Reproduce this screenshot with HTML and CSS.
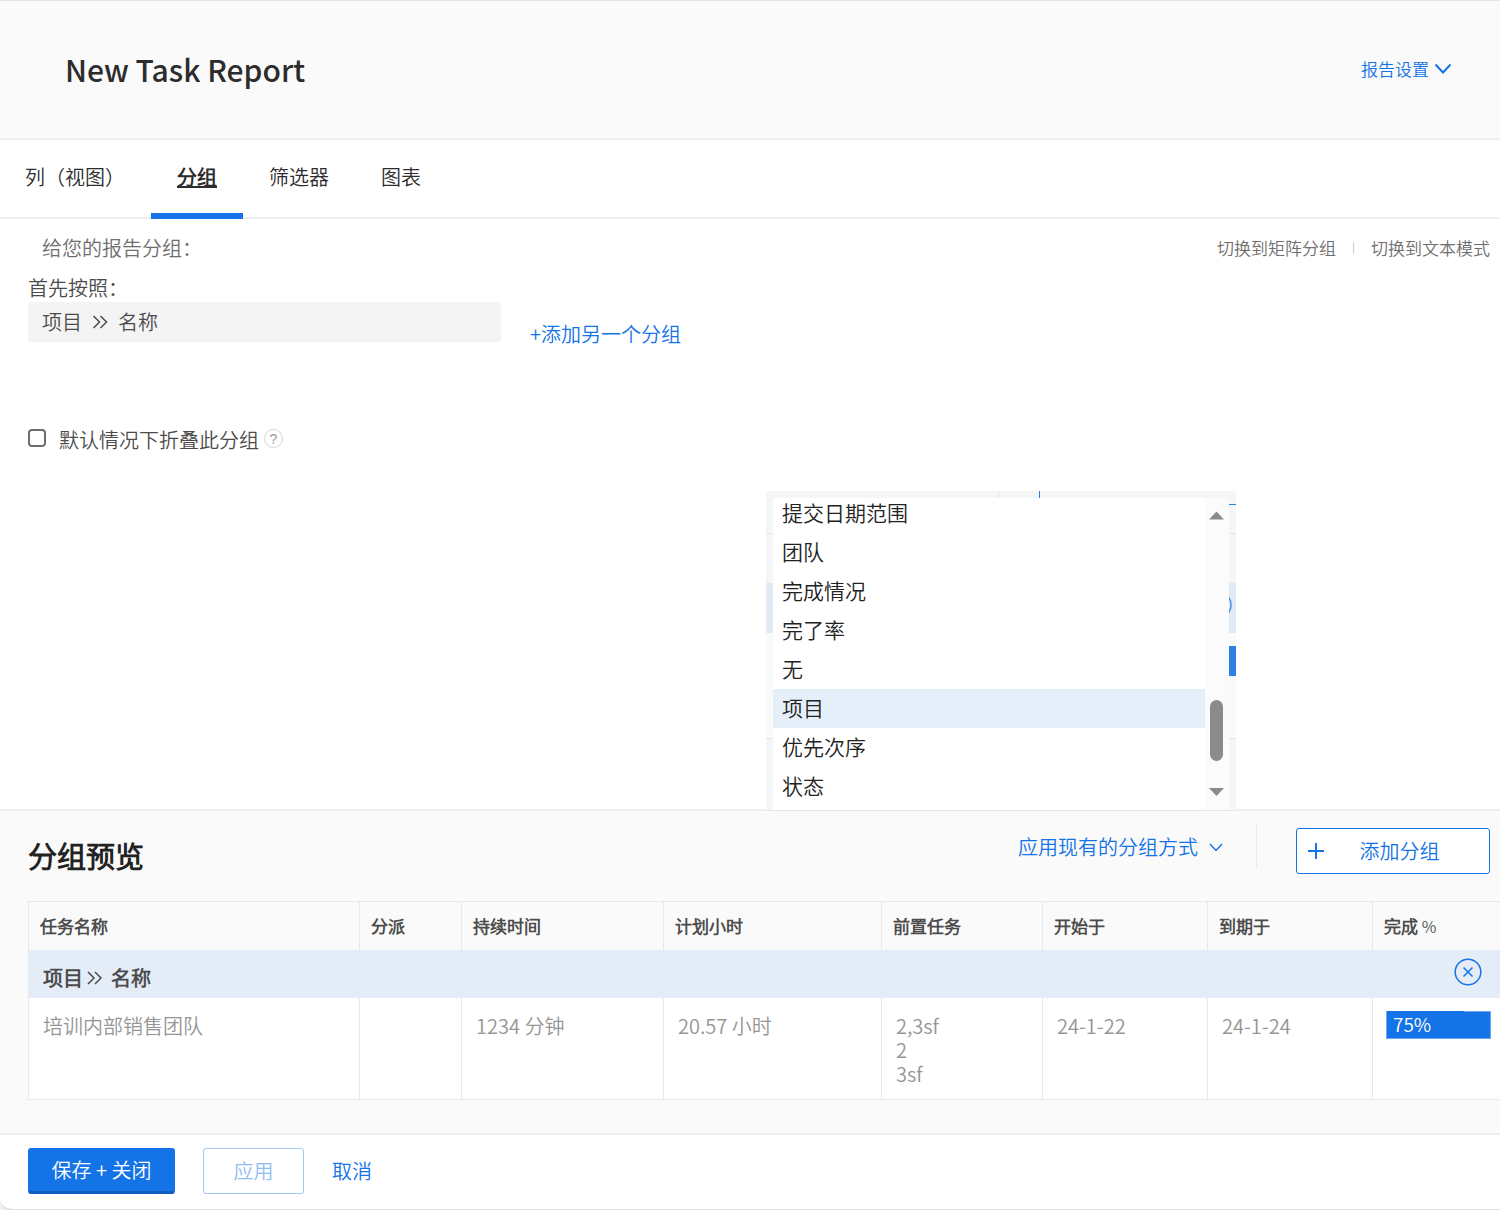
FILE: index.html
```html
<!DOCTYPE html>
<html lang="zh-CN">
<head>
<meta charset="utf-8">
<meta name="viewport" content="width=device-width, initial-scale=1">
<title>New Task Report</title>
<link rel="stylesheet" href="styles.css">
</head>
<body>
<div class="page">
  <header class="header">
    <h1 class="title">New Task Report</h1>
    <button class="link settings" type="button">报告设置
      <svg width="18" height="12" viewBox="0 0 18 12" fill="none" stroke="currentColor" stroke-width="2"><path d="M1.500 1.500 9 9.500l7.500-8"/></svg>
    </button>
  </header>

  <nav class="tabs">
    <a class="tab" href="#columns">列（视图）</a>
    <a class="tab active" href="#groupings" aria-current="page">分组</a>
    <a class="tab" href="#filters">筛选器</a>
    <a class="tab" href="#chart">图表</a>
  </nav>

  <main class="builder">
    <div class="intro">
      <p class="intro-text">给您的报告分组：</p>
      <div class="modes">
        <a href="#matrix">切换到矩阵分组</a>
        <span class="mode-rule"></span>
        <a href="#text">切换到文本模式</a>
      </div>
    </div>
    <div class="grouping">
      <div class="field">
        <label for="first-by">首先按照：</label>
        <button id="first-by" class="field-value" type="button">项目
          <svg width="16" height="14" viewBox="0 0 16 14" fill="none" stroke="currentColor" stroke-width="1.500"><path d="m1.500 1 6 6-6 6M8.500 1l6 6-6 6"/></svg>
          名称</button>
      </div>
      <button class="link add-another" type="button">+添加另一个分组</button>
    </div>
    <div class="collapse">
      <input id="collapse" class="check" type="checkbox">
      <label for="collapse">默认情况下折叠此分组</label>
      <button class="help" type="button" aria-label="帮助">?</button>
    </div>

    <div class="popup">
      <svg class="popup-back" viewBox="0 0 470 320" fill="none">
        <path fill="#f5f6f6" d="M0 0h470v320H0z"/>
        <path fill="#f9fbfb" d="M0 142h470v105H0z"/>
        <path fill="#e0eaf5" d="M0 92h470v50H0z"/>
        <path stroke="#e4e6e6" d="M0 42.500h470M0 247.500h470M232.500 0v8M0 319.500h470"/>
        <path stroke="#2f80e4" d="M273.500 0v8M463 13.500h7"/>
        <circle cx="452" cy="114" r="13" stroke="#4a90e8" stroke-width="1.500"/>
        <path fill="#2f80e4" d="M463 155h7v30h-7z"/>
      </svg>
      <div class="list">
        <select class="options" size="8" aria-label="分组字段">
          <option>提交日期范围</option>
          <option>团队</option>
          <option>完成情况</option>
          <option>完了率</option>
          <option>无</option>
          <option selected>项目</option>
          <option>优先次序</option>
          <option>状态</option>
        </select>
        <svg class="scrollbar" width="24" height="312" viewBox="0 0 24 312" fill="#8b8b8b"><path d="M4 21.500 11.500 13.500l7.500 8zM4 290l7.500 8 7.500-8z"/><rect x="5" y="202" width="13" height="61" rx="6.500"/></svg>
      </div>
    </div>
  </main>

  <section class="preview">
    <div class="preview-head">
      <h2 class="preview-title">分组预览</h2>
      <button class="link existing" type="button">应用现有的分组方式
        <svg width="14" height="9" viewBox="0 0 14 9" fill="none" stroke="currentColor" stroke-width="1.500"><path d="m1 1 6 6.500L13 1"/></svg>
      </button>
      <span class="head-rule"></span>
      <button class="btn add" type="button">
        <svg width="16" height="16" viewBox="0 0 16 16" stroke="currentColor" stroke-width="2"><path d="M8 0v16M0 8h16"/></svg>
        <span class="add-label">添加分组</span>
      </button>
    </div>
    <table class="table">
      <colgroup>
        <col class="c-name"><col class="c-assign"><col class="c-duration"><col class="c-hours"><col class="c-pred"><col class="c-date"><col class="c-date"><col>
      </colgroup>
      <thead>
        <tr><th>任务名称</th><th>分派</th><th>持续时间</th><th>计划小时</th><th>前置任务</th><th>开始于</th><th>到期于</th><th>完成 <span class="percent">%</span></th></tr>
      </thead>
      <tbody>
        <tr class="group-row">
          <th colspan="8">
            <div class="group">
              <span>项目</span>
              <svg width="15" height="14" viewBox="0 0 15 14" fill="none" stroke="currentColor" stroke-width="1.500"><path d="m1 1 6 6-6 6M8 1l6 6-6 6"/></svg>
              <span class="group-name">名称</span>
              <button class="remove" type="button" aria-label="移除分组">
                <svg width="28" height="28" viewBox="0 0 28 28" fill="none" stroke="currentColor" stroke-width="1.500"><circle cx="14" cy="14" r="12.800"/><path d="m9.500 9.500 9 9m0-9-9 9"/></svg>
              </button>
            </div>
          </th>
        </tr>
        <tr class="data-row">
          <td>培训内部销售团队</td><td></td><td>1234 分钟</td><td>20.57 小时</td><td>2,3sf<br>2<br>3sf</td><td>24-1-22</td><td>24-1-24</td>
          <td class="progress-cell"><div class="bar"><span class="bar-edge" style="width:75%"></span>75%</div></td>
        </tr>
      </tbody>
    </table>
  </section>

  <footer class="footer">
    <button class="btn primary" type="button">保存 + 关闭</button>
    <button class="btn apply" type="button" disabled>应用</button>
    <button class="link cancel" type="button">取消</button>
  </footer>
</div>
</body>
</html>
```
FILE: styles.css
```css
* { box-sizing: border-box; }

body {
  margin: 0;
  background: #f0f0f0;
  color: #4b4b4b;
  font: 350 20px/24px "Noto Sans CJK SC DemiLight", "Noto Sans CJK SC", sans-serif;
}

h1, h2, p { margin: 0; }
a { color: inherit; text-decoration: none; }
button { font: inherit; padding: 0; border: 0; background: none; color: inherit; }
svg { display: block; flex: none; }

.page {
  min-height: 100vh;
  display: flex;
  flex-direction: column;
  background: #fff;
  border-top: 1px solid #e4e4e4;
  border-bottom: 2px solid #e0e0e0;
  border-bottom-left-radius: 12px;
  overflow: hidden;
}

.link { display: flex; align-items: center; color: #1473e6; }

/* Header */
.header {
  display: flex;
  align-items: center;
  justify-content: space-between;
  padding: 48px 48px 49px 65px;
  background: #fafafa;
  border-bottom: 2px solid #efefef;
}
.title {
  color: #2c2c2c;
  font-family: "Noto Sans CJK SC", sans-serif;
  font-size: 30px;
  font-weight: 500;
  line-height: 40px;
}
.settings { gap: 5px; font-size: 17px; }

/* Tabs */
.tabs {
  display: flex;
  padding-left: 25px;
  border-bottom: 2px solid #efefef;
  color: #2c2c2c;
}
.tab {
  padding: 25px 26px 24px;
  border-bottom: 6px solid transparent;
  margin-bottom: -2px;
}
.tab:first-child { padding-left: 0; }
.tab.active {
  border-color: #1473e6;
  font-weight: 700;
  text-decoration: underline;
  text-decoration-thickness: 2px;
}

/* Grouping builder */
.builder {
  position: relative;
  flex: 1;
  min-height: 590px;
  padding: 17px 10px 0 28px;
}
.intro { display: flex; align-items: center; justify-content: space-between; }
.intro-text { padding-left: 14px; color: #6e6e6e; }
.modes {
  display: flex;
  align-items: center;
  gap: 17px;
  color: #6e6e6e;
  font-size: 17px;
}
.mode-rule { width: 1px; height: 12px; background: #cfcfcf; }

.grouping { display: flex; align-items: flex-end; gap: 29px; padding-top: 16px; }
.field { width: 473px; }
.field label { display: block; }
.field-value {
  display: flex;
  align-items: center;
  gap: 10px;
  width: 100%;
  height: 40px;
  margin-top: 2px;
  padding-left: 14px;
  background: #f4f4f4;
  border-radius: 3px;
}
.add-another { margin-bottom: -4px; }

.collapse { display: flex; align-items: center; padding-top: 86px; }
.check {
  appearance: none;
  width: 18px;
  height: 18px;
  margin: 0 13px 4px 0;
  border: 2px solid #6e6e6e;
  border-radius: 4px;
}
.help {
  width: 19px;
  height: 19px;
  margin: 0 0 3px 5px;
  border: 1px solid #d6d6d6;
  border-radius: 50%;
  color: #9a9a9a;
  font: 400 14px/16px "Liberation Sans", sans-serif;
}

/* Open field list */
.popup {
  position: absolute;
  right: 264px;
  bottom: -2px;
  z-index: 1;
  width: 470px;
  height: 320px;
  padding: 7px 7px 1px;
}
.popup-back { position: absolute; inset: 0; width: 100%; height: 100%; }
.list {
  position: relative;
  display: flex;
  height: 312px;
  background: #fff;
  overflow: hidden;
}
.options {
  appearance: none;
  flex: 1;
  height: 316px;
  margin: -4px 0 0;
  padding: 0;
  border: 0;
  outline: 0;
  background: #fff;
  color: #222;
  font: inherit;
  font-size: 21px;
  overflow: hidden;
}
.options option {
  height: 39px;
  min-height: 39px;
  padding: 3px 9px 0;
  color: #222;
  font: inherit;
}
.options option:checked { background: #e5effa linear-gradient(#e5effa, #e5effa); color: #222; }
.scrollbar { background: #fbfbfb; }

/* Preview */
.preview {
  padding: 17px 0 33px 28px;
  background: #fafafa;
  border-top: 2px solid #efefef;
}
.preview-head { display: flex; align-items: center; padding-right: 10px; height: 46px; }
.preview-title {
  margin-right: auto;
  padding-top: 8px;
  color: #222;
  font-size: 29px;
  font-weight: 700;
  line-height: 34px;
}
.existing { gap: 11px; margin-bottom: 8px; }
.head-rule { width: 1px; height: 46px; margin: 0 39px 10px 33px; background: #e8e8e8; }
.btn {
  display: flex;
  align-items: center;
  justify-content: center;
  height: 46px;
  border: 1px solid #1473e6;
  border-radius: 3px;
}
.add { width: 194px; padding-left: 11px; color: #1473e6; background: #fff; }
.add-label { flex: 1; padding-right: 14px; }

.table {
  width: 100%;
  margin-top: 27px;
  table-layout: fixed;
  border-collapse: collapse;
  border: 1px solid #e8e8e8;
  border-right: 0;
}
.c-name { width: 331px; }
.c-assign { width: 102px; }
.c-duration { width: 202px; }
.c-hours { width: 218px; }
.c-pred { width: 161px; }
.c-date { width: 165px; }
.table thead th {
  height: 48px;
  padding: 0 11px;
  border-right: 1px solid #e8e8e8;
  font-size: 17px;
  font-weight: 700;
  text-align: left;
}
.table tr > :last-child { border-right: 0; }
.percent { font-size: 16px; font-weight: 350; }
.group-row th { padding: 0; background: #e3ecf7; }
.group { display: flex; align-items: center; padding: 8px 18px 0 14px; font-weight: 700; }
.group svg { margin-left: 4px; }
.group-name { margin-left: 9px; }
.remove { margin: 0 0 12px auto; color: #1473e6; }
.group .remove svg { margin: 0; }
.data-row td {
  padding: 16px 14px 13px;
  background: #fff;
  border-right: 1px solid #e8e8e8;
  color: #959595;
  vertical-align: top;
}
.data-row .progress-cell { padding: 13px 9px 0 13px; }
.bar {
  position: relative;
  height: 28px;
  padding-left: 6px;
  background: #1473e6;
  border: 1px solid #6fa8ef;
  color: #fff;
  font-size: 19px;
}
.bar-edge { position: absolute; left: 0; top: -1px; height: 1px; background: #1473e6; }

/* Footer */
.footer {
  display: flex;
  align-items: center;
  gap: 28px;
  padding: 13px 28px 15px;
  border-top: 2px solid #efefef;
}
.primary {
  width: 147px;
  background: #1473e6;
  border-bottom: 3px solid #0d5cc0;
  color: #fff;
}
.apply { width: 101px; background: #fff; border-color: #a5c9f5; color: #8fbcf3; }
```
